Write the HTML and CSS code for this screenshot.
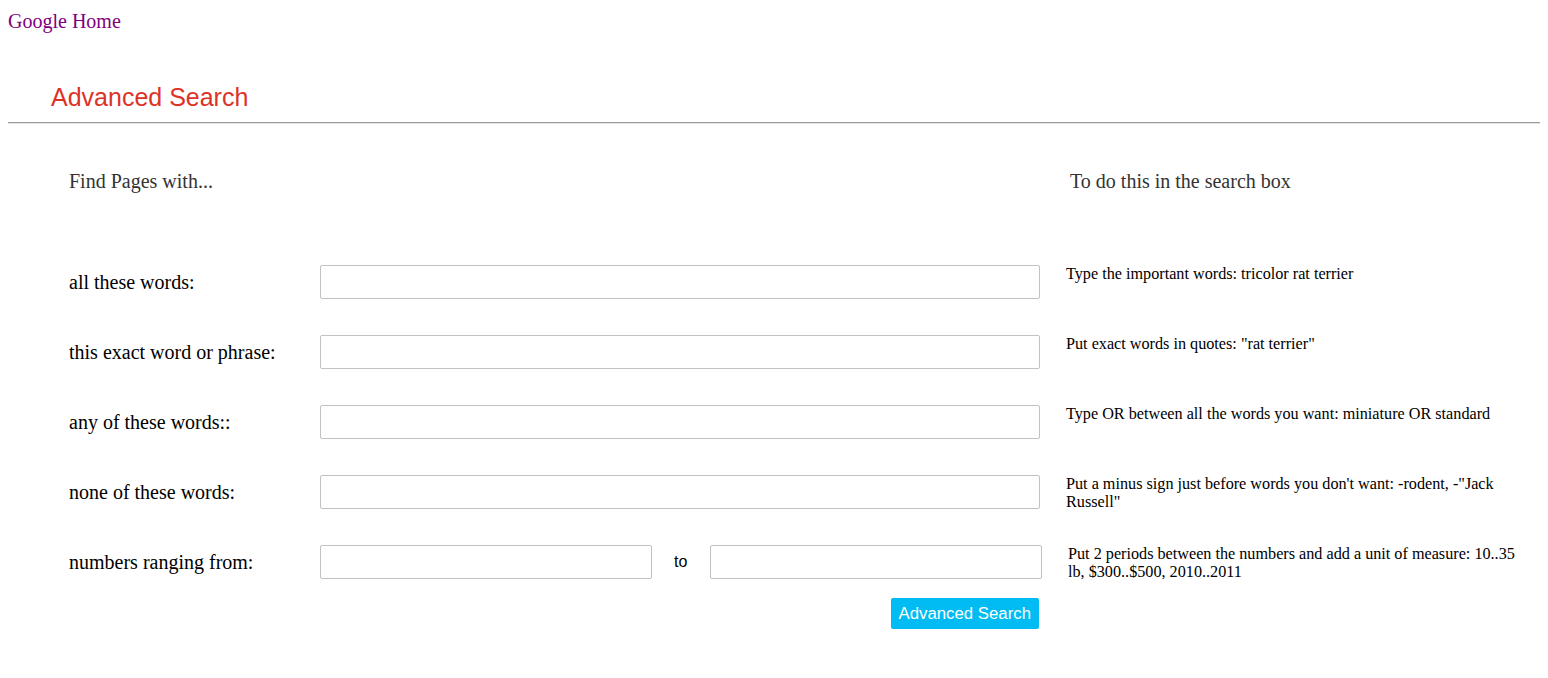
FILE: index.html
```html
<!DOCTYPE html>
<html lang="en">
<head>
<meta charset="utf-8">
<title>Advanced Search</title>
<link rel="stylesheet" href="styles.css">
</head>
<body>
<a class="home" href="#">Google Home</a>
<div class="header">
  <h1 class="title">Advanced Search</h1>
</div>
<form class="main">
  <div class="heads">
    <div class="head-left">Find Pages with...</div>
    <div class="head-right">To do this in the search box</div>
  </div>
  <div class="row">
    <label class="label">all these words:</label>
    <input class="field" type="text">
    <div class="help">Type the important words: tricolor rat terrier</div>
  </div>
  <div class="row">
    <label class="label">this exact word or phrase:</label>
    <input class="field" type="text">
    <div class="help">Put exact words in quotes: "rat terrier"</div>
  </div>
  <div class="row">
    <label class="label">any of these words::</label>
    <input class="field" type="text">
    <div class="help">Type OR between all the words you want: miniature OR standard</div>
  </div>
  <div class="row">
    <label class="label">none of these words:</label>
    <input class="field" type="text">
    <div class="help">Put a minus sign just before words you don't want: -rodent, -"Jack Russell"</div>
  </div>
  <div class="row row-last">
    <label class="label">numbers ranging from:</label>
    <div class="range">
      <input class="field field-half" type="text">
      <span class="to">to</span>
      <input class="field field-half" type="text">
    </div>
    <div class="help help-range">Put 2 periods between the numbers and add a unit of measure: 10..35 lb, $300..$500, 2010..2011</div>
  </div>
  <div class="actions">
    <button class="submit" type="button">Advanced Search</button>
  </div>
</form>
</body>
</html>
```
FILE: styles.css
```css
html {
  overflow-x: hidden;
}

body {
  margin: 8px;
  font-family: "Liberation Serif", "Times New Roman", serif;
  background: #fff;
  color: #000;
}

.home {
  display: block;
  padding-top: 2px;
  font-size: 20px;
  line-height: 23px;
  color: #800080;
  text-decoration: none;
}

.header {
  box-sizing: border-box;
  width: calc(100% + 40px);
  margin-left: -1px;
  padding: 50px 0 11px 44px;
  border-bottom: 1px solid #9c9c9c;
  box-shadow: 0 1px 0 #e2e2e2;
}

.title {
  margin: 0;
  font-family: "Liberation Sans", Arial, sans-serif;
  font-weight: normal;
  font-size: 25px;
  line-height: 28px;
  color: #dd3327;
}

.main {
  padding-left: 61px;
  padding-top: 47px;
  margin: 0;
}

.heads {
  display: flex;
  font-size: 20px;
  line-height: 23px;
  color: #333;
  margin-bottom: 72px;
}

.head-left {
  width: 997px;
}

.head-right {
  padding-left: 4px;
}

.row {
  display: flex;
  align-items: flex-start;
  height: 70px;
}

.row-last {
  height: 34px;
}

.label {
  width: 251px;
  height: 34px;
  display: flex;
  align-items: center;
  font-size: 20px;
  flex-shrink: 0;
}

.field {
  box-sizing: border-box;
  width: 720px;
  height: 34px;
  margin: 0;
  border: 1px solid #c2c2c2;
  border-radius: 2px;
  padding: 0 8px;
  font-size: 16px;
  flex-shrink: 0;
  background: #fff;
}

.range {
  display: flex;
  align-items: center;
  width: 722px;
  flex-shrink: 0;
}

.field-half {
  width: 332px;
}

.to {
  margin: 0 22px;
  font-family: "Liberation Sans", Arial, sans-serif;
  font-size: 16px;
  width: 14px;
}

.help {
  margin-left: 26px;
  margin-top: 0;
  width: 460px;
  font-size: 16.2px;
  line-height: 18px;
}

.help-range {
  margin-left: 26px;
}

.actions {
  display: flex;
  justify-content: flex-end;
  width: 970px;
  margin-top: 19px;
}

.submit {
  height: 31px;
  padding: 0 8px;
  border: none;
  border-radius: 2px;
  background: #00bcf2;
  color: #fff;
  font-family: "Liberation Sans", Arial, sans-serif;
  font-size: 16.8px;
}
```
